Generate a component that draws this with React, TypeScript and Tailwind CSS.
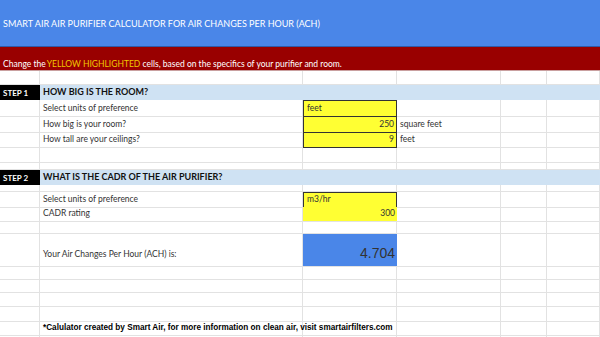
import React from "react";

const cols = "grid grid-cols-[40px_263px_94px_104px_46px_1fr]";
const line = "border-r border-b border-[#e2e2e2]";
const body = "font-['Lato','Open_Sans',sans-serif] text-[8.5px] text-[#333]";

function Cell({ className = "", children }: { className?: string; children?: React.ReactNode }) {
  return <div className={`${line} flex items-end pl-[3px] pb-[1px] overflow-visible whitespace-nowrap ${className}`}>{children}</div>;
}

function Blank({ h }: { h: string }) {
  return (
    <div className={`${cols} ${h}`}>
      <Cell />
      <Cell />
      <Cell />
      <Cell />
      <Cell />
      <Cell />
    </div>
  );
}

function DataRow({
  h,
  label,
  value,
  unit,
  yellow,
  right,
}: {
  h: string;
  label?: string;
  value?: string;
  unit?: string;
  yellow?: string;
  right?: boolean;
}) {
  return (
    <div className={`${cols} ${h}`}>
      <Cell />
      <Cell>{label}</Cell>
      <div
        className={`flex items-end pb-[1px] bg-[#ffff33] ${yellow} ${
          right ? "justify-end pr-[2px]" : "pl-[3px]"
        }`}
      >
        {value}
      </div>
      <Cell>{unit}</Cell>
      <Cell />
      <Cell />
    </div>
  );
}

function StepRow({ step, title }: { step: string; title: string }) {
  return (
    <div className="grid grid-cols-[40px_1fr] h-[15px] border-b border-[#e2e2e2]">
      <div className="bg-black text-white font-bold text-[8px] flex items-end pl-[3px] pb-[1px]">{step}</div>
      <div className="bg-[#cfe2f3] font-bold text-[9px] text-[#111] flex items-end pl-[3px] pb-[1px]">{title}</div>
    </div>
  );
}

export default function App() {
  return (
    <div className={`w-[600px] h-[337px] overflow-hidden bg-white ${body}`}>
      <div className="h-[47px] bg-[#4a86e8] border-b border-[#2f5aa8] flex items-center pl-[3px] text-white text-[9px] pt-[2px]">
        SMART AIR AIR PURIFIER CALCULATOR FOR AIR CHANGES PER HOUR (ACH)
      </div>
      <div className="h-[24px] bg-[#990000] border-b border-[#c9a0a0] flex items-end pl-[3px] pb-[2px] leading-none text-white text-[8.5px]">
        Change the<span className="text-[#f1c800] ml-[1px]">YELLOW HIGHLIGHTED</span>&nbsp;cells, based on the specifics of your purifier and room.
      </div>
      <Blank h="h-[14px]" />
      <StepRow step="STEP 1" title="HOW BIG IS THE ROOM?" />
      <DataRow h="h-[17px]" label="Select units of preference" value="feet" yellow="border border-[#333]" />
      <DataRow h="h-[16px]" label="How big is your room?" value="250" unit="square feet" yellow="border-x border-b border-[#333]" right />
      <DataRow h="h-[15px]" label="How tall are your ceilings?" value="9" unit="feet" yellow="border-x border-b border-[#333]" right />
      <Blank h="h-[15px]" />
      <Blank h="h-[7px]" />
      <StepRow step="STEP 2" title="WHAT IS THE CADR OF THE AIR PURIFIER?" />
      <Blank h="h-[7px]" />
      <DataRow h="h-[15px]" label="Select units of preference" value="m3/hr" yellow="border border-[#333]" />
      <DataRow h="h-[15px]" label="CADR rating" value="300" yellow="border-b border-[#e2e2e2]" right />
      <Blank h="h-[12px]" />
      <div className={`${cols} h-[33px]`}>
        <Cell />
        <Cell className="pb-[5px]">Your Air Changes Per Hour (ACH) is:</Cell>
        <div className="bg-[#4a86e8] border-b border-[#e2e2e2] flex items-end justify-end pr-[2px] pb-[2px] font-['Liberation_Sans',Arial,sans-serif] text-[14px] text-[#333]">
          4.704
        </div>
        <Cell />
        <Cell />
        <Cell />
      </div>
      <Blank h="h-[13px]" />
      <Blank h="h-[13px]" />
      <Blank h="h-[14px]" />
      <Blank h="h-[15px]" />
      <div className={`${cols} h-[12px]`}>
        <Cell />
        <Cell className="font-['Liberation_Sans',Arial,sans-serif] font-bold text-[8.2px] text-black">
          *Calulator created by Smart Air, for more information on clean air, visit smartairfilters.com
        </Cell>
        <Cell />
        <Cell />
        <Cell />
        <Cell />
      </div>
      <Blank h="h-[10px]" />
    </div>
  );
}
